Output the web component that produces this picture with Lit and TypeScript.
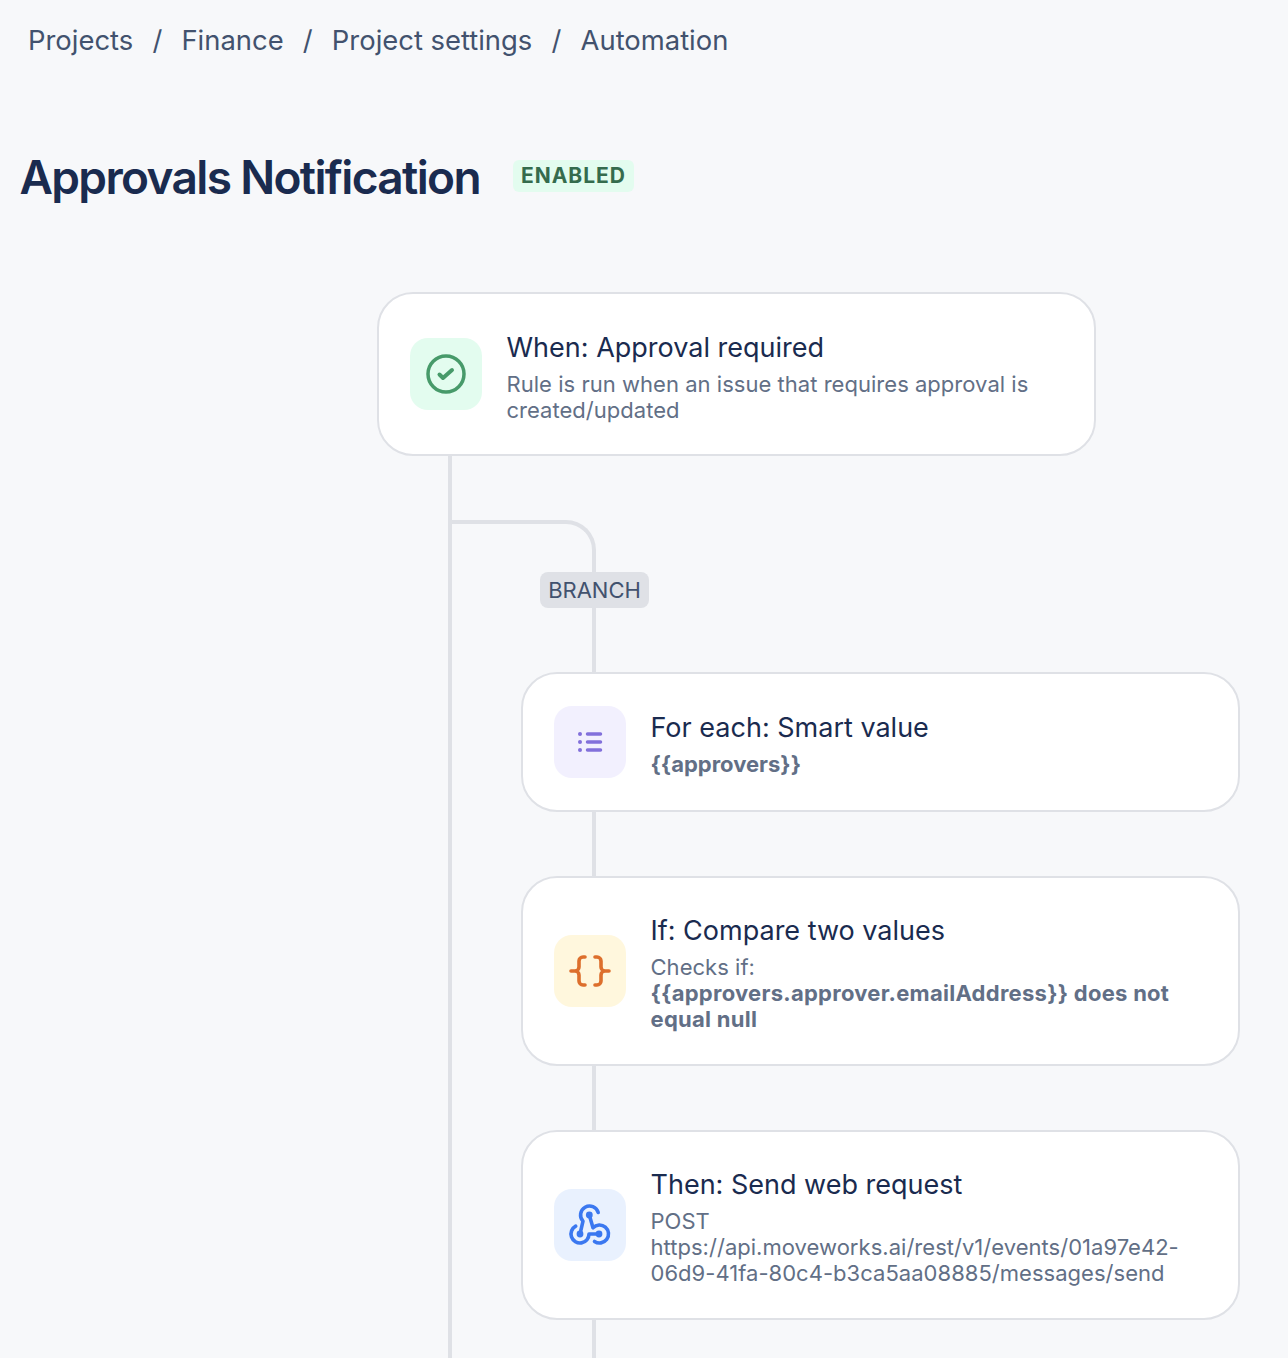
import { LitElement, html, css, svg } from 'lit';
import { customElement } from 'lit/decorators.js';

const checkIcon = svg`<circle cx="24" cy="24" r="18" fill="none" stroke="currentColor" stroke-width="3.5"/><path d="M17.5 24.5l3.5 3.5 9-8" fill="none" stroke="currentColor" stroke-width="4" stroke-linecap="round" stroke-linejoin="round"/>`;
const listIcon = svg`<g fill="currentColor"><circle cx="14" cy="16" r="2"/><circle cx="14" cy="24" r="2"/><circle cx="14" cy="32" r="2"/></g><path d="M21.5 16h13M21.5 24h13M21.5 32h13" fill="none" stroke="currentColor" stroke-width="3.5" stroke-linecap="round"/>`;
const bracesIcon = svg`<path d="M19 10h-2a4 4 0 0 0-4 4v6a4 4 0 0 1-4 4H5M9 24a4 4 0 0 1 4 4v6a4 4 0 0 0 4 4h2M29 10h2a4 4 0 0 1 4 4v6a4 4 0 0 0 4 4h4M39 24a4 4 0 0 0-4 4v6a4 4 0 0 1-4 4h-2" fill="none" stroke="currentColor" stroke-width="3.6" stroke-linecap="round"/>`;
// three arcs, each centred on a dot, with a straight run to the next dot
const webhookIcon = svg`<g fill="none" stroke="currentColor" stroke-width="3.6" stroke-linecap="round" stroke-linejoin="round"><path d="M32.2 11.5A9 9 0 1 0 17 20.2L14 33"/><path d="M9.7 25.1A9 9 0 1 0 23 33H33"/><path d="M28.5 40.5A9 9 0 1 0 27 26.8L23.3 14"/></g><g fill="currentColor"><circle cx="23.3" cy="14" r="3.4"/><circle cx="14" cy="33" r="3.4"/><circle cx="33" cy="33" r="3.4"/></g>`;

@customElement('app-root')
export class AppRoot extends LitElement {
  static styles = css`
    :host {
      display: block;
      height: 1358px;
      overflow: hidden;
      background: #f7f8fa;
      font-family: Inter, 'Liberation Sans', sans-serif;
      color: #172b4d;
    }

    .breadcrumbs {
      display: flex;
      gap: 19.2px;
      padding: 23px 0 0 28px;
      font-size: 27.4px;
      line-height: 34px;
      color: #42526e;
    }

    .heading {
      display: flex;
      align-items: center;
      gap: 33px;
      padding: 90px 0 0 19.5px;
    }

    h1 {
      margin: 0;
      font-size: 46px;
      line-height: 60px;
      font-weight: 600;
      letter-spacing: -1.65px;
      color: #1a2b4f;
    }

    .lozenge {
      height: 32px;
      line-height: 32px;
      padding: 0 8px;
      margin-top: -2px;
      border-radius: 6px;
      background: #e3fcef;
      color: #356b4d;
      font-size: 21px;
      font-weight: 700;
      letter-spacing: 1px;
    }

    .tree {
      width: 719px;
      margin: 85px 0 0 377px;
    }

    .trunk {
      height: 1000px;
      margin-left: 71px;
      border-left: 4px solid #dfe1e6;
      padding: 64px 0 0 69px;
    }

    .card {
      box-sizing: border-box;
      width: 719px;
      display: flex;
      gap: 24.5px;
      padding: 0 31px;
      background: #fff;
      border: 2px solid #dfe1e6;
      border-radius: 36px;
    }

    .icon {
      flex: none;
      align-self: center;
      width: 72px;
      height: 72px;
      display: flex;
      align-items: center;
      justify-content: center;
      border-radius: 18px;
    }

    .icon svg {
      width: 48px;
      height: 48px;
    }

    .green { background: #e3fcef; color: #479a6a; }
    .purple { background: #f2f0fe; color: #8270db; }
    .yellow { background: #fff7dd; color: #dd6f2c; }
    .blue { background: #e9f1fe; color: #3b78f0; }

    .text {
      padding: 36px 0 32px;
    }

    .text.lines-2 {
      padding: 37px 0 31px;
    }

    .text.lines-1 {
      padding: 37px 0 33px;
    }

    .title {
      font-size: 27px;
      line-height: 34px;
      color: #1a2b4f;
    }

    .desc {
      margin-top: 6px;
      font-size: 22px;
      line-height: 26px;
      letter-spacing: 0.03px;
      color: #626f86;
    }

    .desc b {
      font-weight: 700;
      letter-spacing: 0.27px;
    }

    .desc b.tight {
      letter-spacing: 0;
    }

    .elbow {
      box-sizing: border-box;
      width: 144px;
      height: 52px;
      margin-left: -69px;
      border-top: 4px solid #dfe1e6;
      border-right: 4px solid #dfe1e6;
      border-top-right-radius: 30px;
    }

    .badge-row {
      width: 147px;
      display: flex;
      justify-content: center;
    }

    .badge {
      height: 36px;
      line-height: 36px;
      padding: 0 8px;
      border-radius: 8px;
      background: #dfe1e6;
      color: #42526e;
      font-size: 22px;
    }

    .line {
      width: 4px;
      height: 64px;
      margin-left: 71px;
      background: #dfe1e6;
    }
  `;

  private renderCard(tone: string, icon: unknown, title: string, desc: unknown, lines = 3) {
    return html`
      <div class="card">
        <div class="icon ${tone}">
          <svg viewBox="0 0 48 48">${icon}</svg>
        </div>
        <div class="text lines-${lines}">
          <div class="title">${title}</div>
          <div class="desc">${desc}</div>
        </div>
      </div>
    `;
  }

  render() {
    return html`
      <nav class="breadcrumbs">
        <span>Projects</span><span>/</span>
        <span>Finance</span><span>/</span>
        <span>Project settings</span><span>/</span>
        <span>Automation</span>
      </nav>
      <div class="heading">
        <h1>Approvals Notification</h1>
        <span class="lozenge">ENABLED</span>
      </div>
      <div class="tree">
        ${this.renderCard('green', checkIcon, 'When: Approval required',
          'Rule is run when an issue that requires approval is created/updated', 2)}
        <div class="trunk">
          <div class="elbow"></div>
          <div class="badge-row"><span class="badge">BRANCH</span></div>
          <div class="line"></div>
          ${this.renderCard('purple', listIcon, 'For each: Smart value', html`<b class="tight">{{approvers}}</b>`, 1)}
          <div class="line"></div>
          ${this.renderCard('yellow', bracesIcon, 'If: Compare two values',
            html`Checks if:<br /><b>{{approvers.approver.emailAddress}} does not equal null</b>`)}
          <div class="line"></div>
          ${this.renderCard('blue', webhookIcon, 'Then: Send web request',
            html`POST<br />https://api.moveworks.ai/rest/v1/events/01a97e42-06d9-41fa-80c4-b3ca5aa08885/messages/send`)}
          <div class="line"></div>
        </div>
      </div>
    `;
  }
}
